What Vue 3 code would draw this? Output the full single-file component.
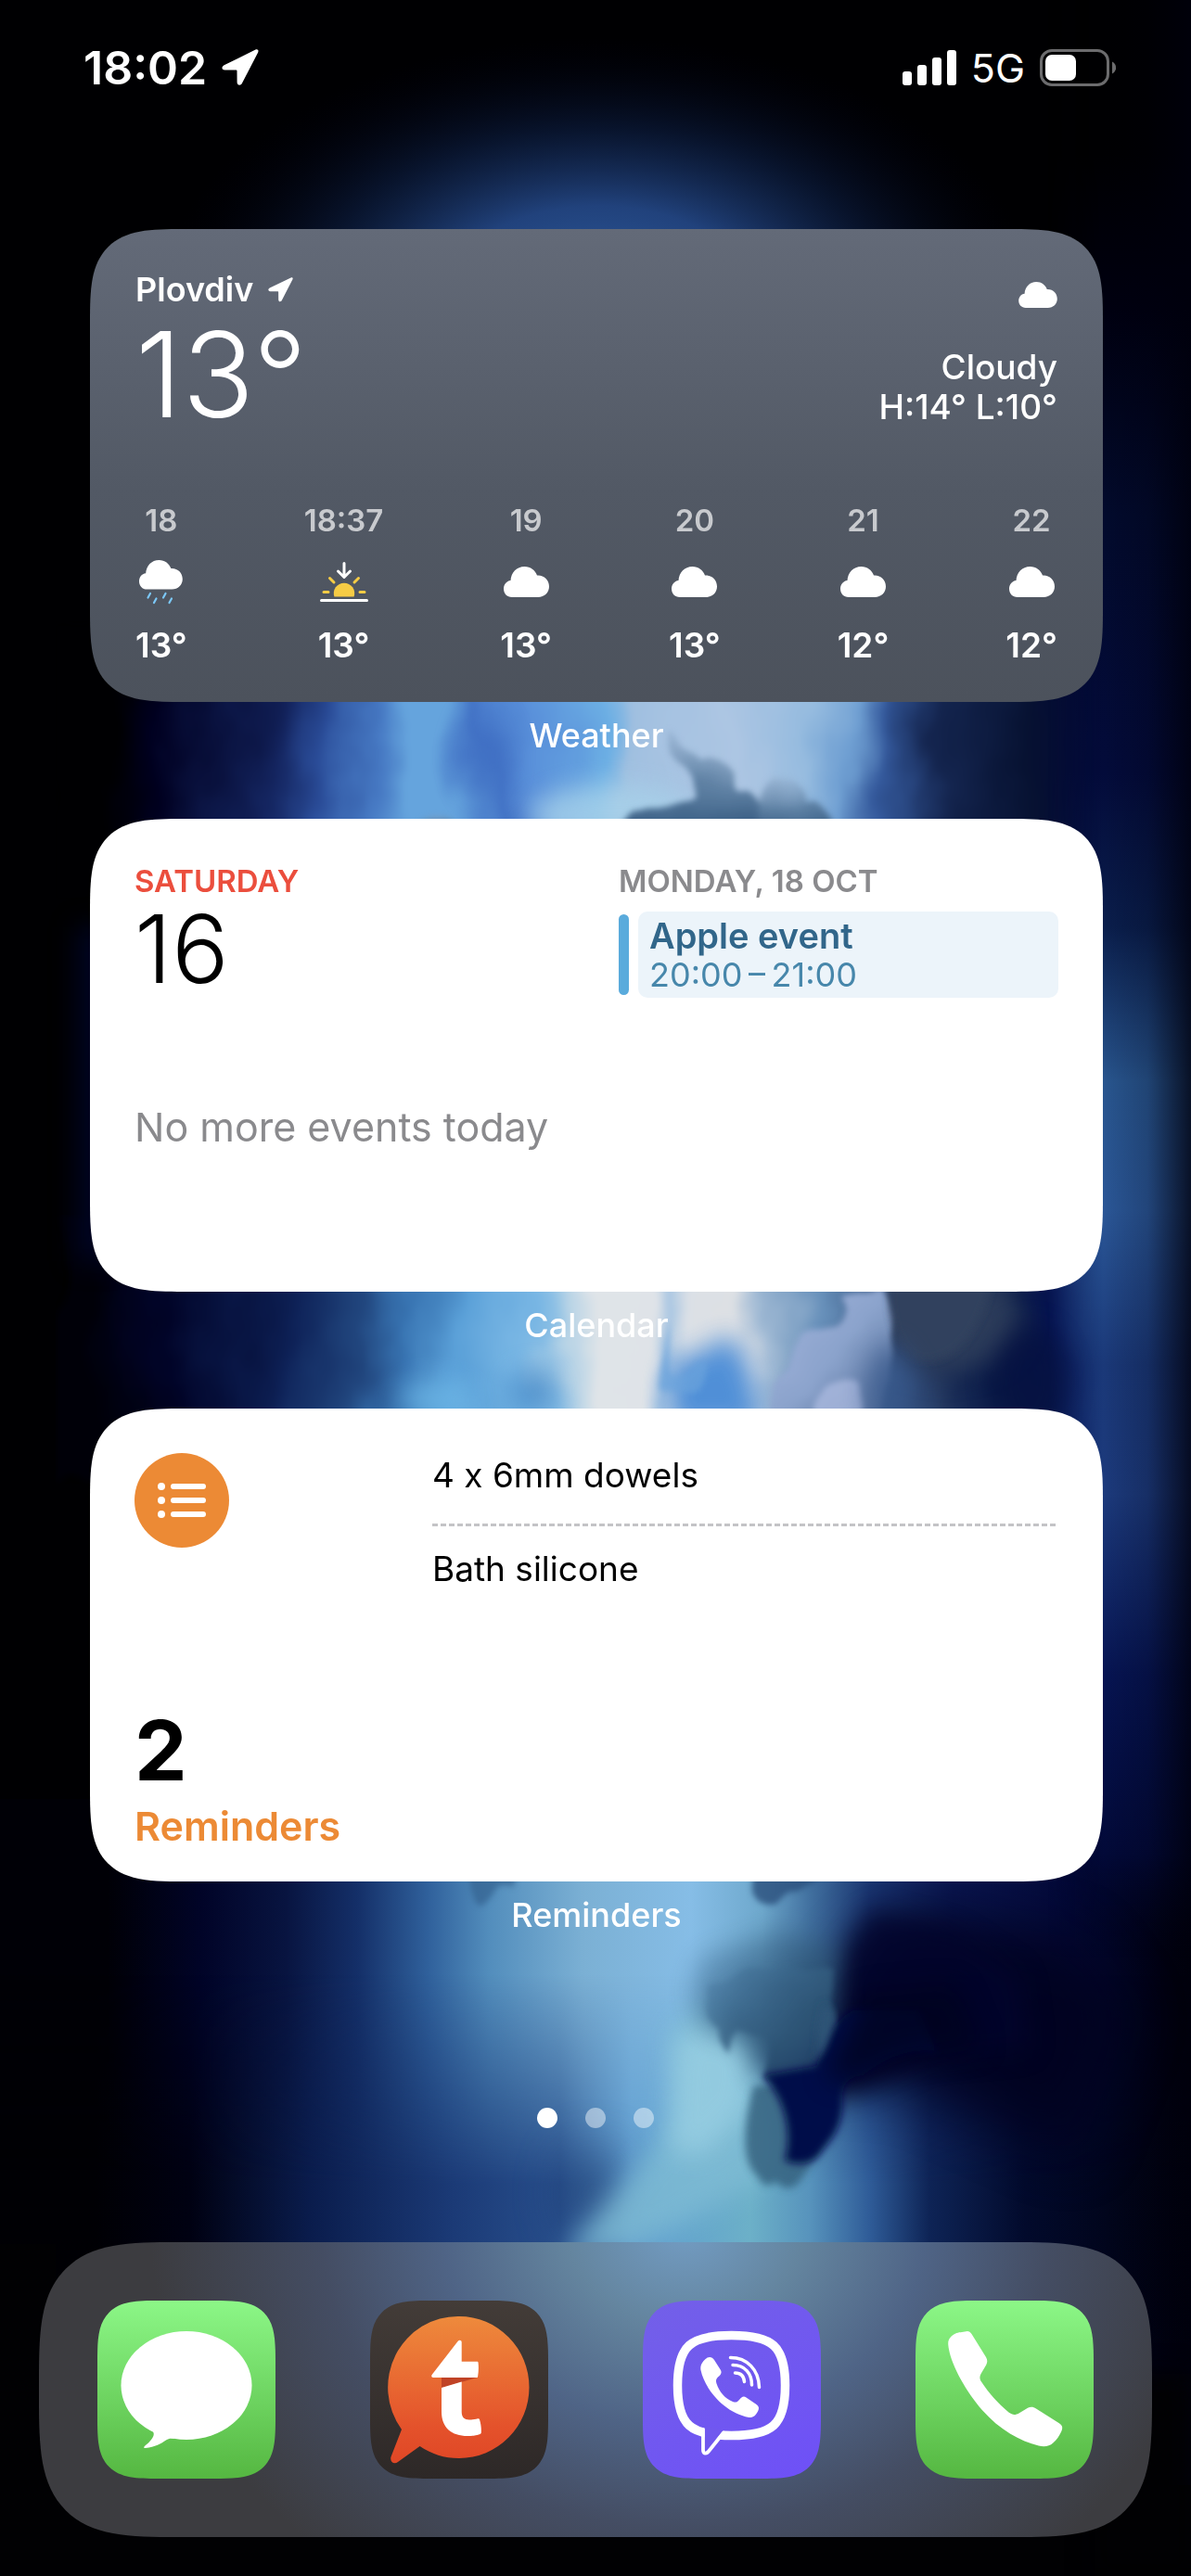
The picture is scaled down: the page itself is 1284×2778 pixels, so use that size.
<script setup>
const forecast = [
  { hour: '18', icon: 'rain', temp: '13°' },
  { hour: '18:37', icon: 'sunset', temp: '13°' },
  { hour: '19', icon: 'cloud', temp: '13°' },
  { hour: '20', icon: 'cloud', temp: '13°' },
  { hour: '21', icon: 'cloud', temp: '12°' },
  { hour: '22', icon: 'cloud', temp: '12°' },
]
const reminders = ['4 x 6mm dowels', 'Bath silicone']
const pages = [1, 2, 3]
const cloudPath =
  'M9 33C3.5 33 0 29 0 24c0-4.5 3-8.500 7.500-9C8 6.500 14 0 22.500 0 29 0 34 4 36 9.500 43.500 9 49 14.500 49 21.500 49 28 44 33 37 33Z'
</script>

<template>
  <div class="screen">
    <svg class="wallpaper" viewBox="0 0 1284 2778" preserveAspectRatio="none" aria-hidden="true">
      <defs>
        <radialGradient id="glow">
          <stop offset="0" stop-color="#2e5c9e" />
          <stop offset=".35" stop-color="#21427c" />
          <stop offset=".65" stop-color="#0b1a3a" stop-opacity=".75" />
          <stop offset="1" stop-color="#000010" stop-opacity="0" />
        </radialGradient>
        <linearGradient id="upper" gradientUnits="userSpaceOnUse" x1="0" y1="0" x2="1284" y2="0">
          <stop offset=".09" stop-color="#000002" />
          <stop offset=".14" stop-color="#000020" />
          <stop offset=".22" stop-color="#142560" />
          <stop offset=".27" stop-color="#2a4c98" />
          <stop offset=".31" stop-color="#477ac4" />
          <stop offset=".34" stop-color="#65a4dd" />
          <stop offset=".375" stop-color="#65a4dd" />
          <stop offset=".41" stop-color="#4373c6" />
          <stop offset=".45" stop-color="#5990da" />
          <stop offset=".505" stop-color="#6cafe4" />
          <stop offset=".53" stop-color="#9fbfe0" />
          <stop offset=".62" stop-color="#adc6e3" />
          <stop offset=".67" stop-color="#95bbdf" />
          <stop offset=".71" stop-color="#6f9fd2" />
          <stop offset=".74" stop-color="#34599c" />
          <stop offset=".79" stop-color="#14254f" />
          <stop offset=".86" stop-color="#071232" />
          <stop offset=".93" stop-color="#020734" />
        </linearGradient>
        <linearGradient id="middle" gradientUnits="userSpaceOnUse" x1="0" y1="0" x2="1284" y2="0">
          <stop offset=".08" stop-color="#000008" />
          <stop offset=".15" stop-color="#010428" />
          <stop offset=".23" stop-color="#0e2258" />
          <stop offset=".3" stop-color="#21467e" />
          <stop offset=".34" stop-color="#3874b2" />
          <stop offset=".39" stop-color="#5aa0d8" />
          <stop offset=".44" stop-color="#78b6e4" />
          <stop offset=".47" stop-color="#b4d2e6" />
          <stop offset=".5" stop-color="#dfe4e8" />
          <stop offset=".545" stop-color="#dfe3e8" />
          <stop offset=".565" stop-color="#a9c6e2" />
          <stop offset=".59" stop-color="#dbe0e6" />
          <stop offset=".615" stop-color="#dde0e4" />
          <stop offset=".64" stop-color="#a5bdd6" />
          <stop offset=".68" stop-color="#6790ba" />
          <stop offset=".74" stop-color="#35517e" />
          <stop offset=".8" stop-color="#22365e" />
          <stop offset=".85" stop-color="#0a1b48" />
          <stop offset=".9" stop-color="#061350" />
          <stop offset=".95" stop-color="#1b3874" />
        </linearGradient>
        <linearGradient id="lower" gradientUnits="userSpaceOnUse" x1="0" y1="0" x2="1284" y2="0">
          <stop offset=".09" stop-color="#000006" />
          <stop offset=".17" stop-color="#010428" />
          <stop offset=".24" stop-color="#081440" />
          <stop offset=".3" stop-color="#142f68" />
          <stop offset=".36" stop-color="#30619c" />
          <stop offset=".41" stop-color="#528dbc" />
          <stop offset=".49" stop-color="#7bb0d4" />
          <stop offset=".58" stop-color="#86bde6" />
          <stop offset=".64" stop-color="#6ea8cc" />
          <stop offset=".68" stop-color="#41709f" />
          <stop offset=".73" stop-color="#1a3672" />
          <stop offset=".8" stop-color="#0a1650" />
          <stop offset=".9" stop-color="#030836" />
          <stop offset="1" stop-color="#00000a" />
        </linearGradient>
        <linearGradient id="base" gradientUnits="userSpaceOnUse" x1="0" y1="0" x2="1284" y2="0">
          <stop offset=".08" stop-color="#000004" />
          <stop offset=".16" stop-color="#000112" />
          <stop offset=".26" stop-color="#0a1c4c" />
          <stop offset=".38" stop-color="#1b3a76" />
          <stop offset=".47" stop-color="#284f8c" />
          <stop offset=".53" stop-color="#5d9cd0" />
          <stop offset=".63" stop-color="#6cb0c8" />
          <stop offset=".68" stop-color="#5793bc" />
          <stop offset=".73" stop-color="#2f5c98" />
          <stop offset=".78" stop-color="#0e2456" />
          <stop offset=".86" stop-color="#020a2c" />
          <stop offset="1" stop-color="#00000c" />
        </linearGradient>
        <linearGradient id="edge" x1="0" y1="0" x2="0" y2="1">
          <stop offset=".06" stop-color="#000002" />
          <stop offset=".12" stop-color="#000010" />
          <stop offset=".2" stop-color="#020a2c" />
          <stop offset=".3" stop-color="#030b3a" />
          <stop offset=".36" stop-color="#0a1e4c" />
          <stop offset=".42" stop-color="#28558e" />
          <stop offset=".47" stop-color="#2a5696" />
          <stop offset=".53" stop-color="#1a3878" />
          <stop offset=".58" stop-color="#1c3a7c" />
          <stop offset=".65" stop-color="#061452" />
          <stop offset=".72" stop-color="#020938" />
          <stop offset=".76" stop-color="#01041e" stop-opacity="0" />
        </linearGradient>
        <linearGradient id="edgeFade" gradientUnits="userSpaceOnUse" x1="1130" y1="0" x2="1284" y2="0">
          <stop offset="0" stop-color="#000" />
          <stop offset=".38" stop-color="#fff" />
          <stop offset="1" stop-color="#fff" />
        </linearGradient>
        <linearGradient id="vignette" gradientUnits="userSpaceOnUse" x1="1190" y1="0" x2="1284" y2="0">
          <stop offset="0" stop-color="#00000c" stop-opacity="0" />
          <stop offset=".5" stop-color="#00000c" stop-opacity=".2" />
          <stop offset="1" stop-color="#00000c" stop-opacity=".8" />
        </linearGradient>
        <linearGradient id="fade" x1="0" y1="0" x2="0" y2="1">
          <stop offset="0" stop-color="#000" />
          <stop offset=".75" stop-color="#fff" />
        </linearGradient>
        <linearGradient id="smoke" x1="0" y1="0" x2="0" y2="1">
          <stop offset="0" stop-color="#8aa5c4" stop-opacity=".35" />
          <stop offset=".5" stop-color="#587b9e" stop-opacity=".9" />
          <stop offset="1" stop-color="#365a80" />
        </linearGradient>
        <linearGradient id="plume" x1="0" y1="0" x2="1" y2="1">
          <stop offset="0" stop-color="#a3b4dc" />
          <stop offset=".5" stop-color="#8ba3cc" />
          <stop offset="1" stop-color="#4a658f" />
        </linearGradient>
        <linearGradient id="teal" x1="0" y1="0" x2="1" y2="1">
          <stop offset="0" stop-color="#4c7ea6" stop-opacity=".35" />
          <stop offset=".6" stop-color="#2d5475" />
          <stop offset="1" stop-color="#1a3660" />
        </linearGradient>
        <mask id="fadeMask">
          <rect y="2130" width="1284" height="648" fill="#fff" />
          <rect y="2130" width="1284" height="300" fill="url(#fade)" />
        </mask>
        <mask id="edgeMask">
          <rect x="1130" width="154" height="2778" fill="url(#edgeFade)" />
        </mask>
        <filter id="b4" x="-30%" y="-30%" width="160%" height="160%"><feGaussianBlur stdDeviation="4" /></filter>
        <filter id="b14" x="-100%" y="-100%" width="300%" height="300%" color-interpolation-filters="sRGB"><feGaussianBlur stdDeviation="14" /></filter>
        <filter id="b30" x="-200%" y="-100%" width="500%" height="300%" color-interpolation-filters="sRGB"><feGaussianBlur stdDeviation="30" /></filter>
        <filter id="flow" x="0" y="0" width="100%" height="100%" color-interpolation-filters="sRGB">
          <feTurbulence type="fractalNoise" baseFrequency=".009 .006" numOctaves="4" seed="11" result="n" />
          <feDisplacementMap in="SourceGraphic" in2="n" scale="90" xChannelSelector="R" yChannelSelector="G" />
          <feGaussianBlur stdDeviation="3" />
        </filter>
        <filter id="wisp" x="-20%" y="-20%" width="140%" height="140%" color-interpolation-filters="sRGB">
          <feTurbulence type="fractalNoise" baseFrequency=".018" numOctaves="2" seed="7" result="n" />
          <feDisplacementMap in="SourceGraphic" in2="n" scale="26" xChannelSelector="R" yChannelSelector="G" />
          <feGaussianBlur stdDeviation="3" />
        </filter>
      </defs>
      <rect width="1284" height="2778" fill="#000002" />
      <ellipse cx="645" cy="320" rx="470" ry="280" fill="url(#glow)" />
      <rect x="60" y="670" width="1180" height="300" fill="url(#upper)" filter="url(#flow)" />
      <rect x="60" y="1310" width="1180" height="290" fill="url(#middle)" filter="url(#flow)" />
      <rect y="1940" width="1284" height="838" fill="url(#lower)" />
      <rect y="2130" width="1284" height="648" fill="url(#base)" mask="url(#fadeMask)" />
      <rect x="1130" width="154" height="2778" fill="url(#edge)" mask="url(#edgeMask)" />
      <rect x="1190" width="94" height="2778" fill="url(#vignette)" />
      <rect x="84" y="1000" width="40" height="360" fill="#000424" filter="url(#b14)" />

      <g>
        <ellipse cx="660" cy="880" rx="90" ry="34" fill="#a8d2ea" opacity=".8" filter="url(#b14)" />
        <ellipse cx="522" cy="815" rx="26" ry="50" fill="#3e6dc2" opacity=".5" filter="url(#b14)" />
        <g filter="url(#wisp)" fill="url(#smoke)">
          <path d="M717 792c16 6 26 30 36 32 6-8 36-6 38 8 2 12 6 20 16 16 10 4 14 24 8 50H668c2-16 8-26 20-24 18-10 44 0 62-14-8-26-30-42-33-68Z" />
          <path d="M818 900c-6-28 0-48 12-58 14-10 34 4 36 24 14-6 22 10 34 34Z" />
          <path d="M450 900c6-20 30-26 44 0Z" />
        </g>
      </g>

      <g>
        <ellipse cx="575" cy="1500" rx="24" ry="24" fill="#3f83c4" opacity=".7" filter="url(#b14)" />
        <ellipse cx="470" cy="1510" rx="40" ry="22" fill="#6cb6e6" opacity=".8" filter="url(#b14)" />
        <path d="M724 1540c-6-50-4-80 16-76 20-6 30-16 46-24 20 20 34 60 32 100Z" fill="#4187d6" opacity=".9" filter="url(#b14)" />
        <path d="M718 1430c8 20 4 40 14 50 14-8 22-20 30-14l-8 34-40 0Z" fill="#6aa3dc" opacity=".7" filter="url(#wisp)" />
        <ellipse cx="1020" cy="1424" rx="80" ry="56" fill="#2c3c5a" filter="url(#b14)" />
        <g filter="url(#wisp)">
          <path d="M832 1540c-4-60 12-108 70-112 18-6 6-18 6-32l44-6c14 40 10 100-12 150Z" fill="url(#plume)" />
          <path d="M878 1535c-6-28 16-52 46-48 10 12 4 30 0 48Z" fill="#aab9de" opacity=".8" />
        </g>
        <path d="M964 1370c-12 34-2 80 24 96 34 8 70-20 84-96Z" fill="#33435f" opacity=".9" filter="url(#b4)" />
        <ellipse cx="960" cy="1500" rx="26" ry="50" fill="#35568a" opacity=".7" filter="url(#b14)" />
        <ellipse cx="1110" cy="1490" rx="40" ry="60" fill="#05103f" opacity=".7" filter="url(#b14)" />
      </g>

      <g>
        <path d="M980 2060c-60 30-94 90-98 130l20 60 60-10 200 90 60-160-60-80Z" fill="#01021f" opacity=".9" filter="url(#b30)" />
        <path d="M940 2060c-24 40-44 60-48 94-2 30 0 50-10 80l20 30 38-14 60-30 110-10-10-80-70-46Z" fill="#02042c" opacity=".85" filter="url(#b14)" />
        <ellipse cx="640" cy="2365" rx="26" ry="44" fill="#1a3566" opacity=".8" filter="url(#b30)" />
        <path d="M722 2190l36-32 60 36 20 130-20 30-130 70-80 10 90-110 40-40Z" fill="#7fbcd4" opacity=".8" filter="url(#b14)" />
        <path d="M728 2202l30-20 54 24-6 70-50 50-36-10Z" fill="#97cee2" opacity=".85" filter="url(#b14)" />
        <path d="M756 2110c-18 36-6 70 10 80l40 14 10 36 50 0 36-50 0-90-60-20Z" fill="url(#teal)" opacity=".9" filter="url(#b14)" />
        <g filter="url(#wisp)">
          <path d="M762 2140c-8 26-2 50 12 54l12 24 10-22 26 4 8 40 44 4 26-60-6-60-60 0Z" fill="url(#teal)" />
          <path d="M820 2010c-10 20-2 44 14 44 10-4 12-18 26-14 12-4 24-6 36-30Z" fill="#2a4f7c" opacity=".8" />
          <path d="M500 2010c6 18 14 40 26 38 8-6 10-14 30-12l14-26Z" fill="#33618e" opacity=".7" />
        </g>
        <path d="M812 2250c-10 40-14 80 4 96 6 12 14 14 20 6 6 8 18 12 26 0 10-12 16-26 24-40l-20-70Z" fill="#35627f" opacity=".85" filter="url(#b4)" />
        <path d="M822 2238c22 22 34 60 24 92 14 6 32 4 40-10 14-16 24-30 22-60 2-14 6-20 22-22 26-20 50-30 80-26l-20-44-70 0c-20 10-30 30-40 60Z" fill="#030d48" filter="url(#b4)" />
        <path d="M930 2150l100-10 30 70-80 10-60 24-30 0Z" fill="#01031f" opacity=".8" filter="url(#b14)" />
        <path d="M888 2160c-8 30-6 50-10 60 10 0 20-30 20-52Z" fill="#2f5577" filter="url(#b4)" />
      </g>
      <rect y="2680" width="1284" height="98" fill="#010103" />
      <rect y="2420" x="0" width="60" height="358" fill="#010103" />
      <rect y="2560" x="1180" width="104" height="218" fill="#010103" filter="url(#b14)" />
    </svg>

    <header class="status">
      <div class="status-left">
        <time>18:02</time>
        <svg width="40" height="40" viewBox="0 0 40 40" aria-label="Location in use">
          <path d="M36.500.6 2.600 17.200C-.6 19-.1 22.400 3.400 22.500l12.200.1c.6 0 .9.300.9.900l.1 12.300c.1 3.600 4 4 5.500.8L39.200 3.400C40.200 1.200 38.600-.4 36.500.6Z" fill="#fff" />
        </svg>
      </div>
      <div class="status-right">
        <svg width="58" height="38" viewBox="0 0 58 38" fill="#fff" aria-label="Signal strength">
          <rect y="23" width="10" height="15" rx="3" />
          <rect x="16" y="16" width="10" height="22" rx="3" />
          <rect x="32" y="8" width="10" height="30" rx="3" />
          <rect x="48" width="10" height="38" rx="3" />
        </svg>
        <span class="network">5G</span>
        <svg width="82" height="40" viewBox="0 0 82 40" aria-label="Battery">
          <rect x="1.500" y="1.500" width="72" height="37" rx="11.500" fill="none" stroke="#6c6c6e" stroke-width="3" />
          <rect x="6" y="6" width="33" height="28" rx="7" fill="#fff" />
          <path d="M78 13.500c5.500 2.500 5.500 10.500 0 13Z" fill="#6c6c6e" />
        </svg>
      </div>
    </header>

    <main class="widgets">
      <section class="widget">
        <div class="card weather">
          <div class="weather-now">
            <div>
              <h2 class="place">
                Plovdiv
                <svg width="27" height="27" viewBox="0 0 40 40" aria-hidden="true">
                  <path d="M36.500.6 2.600 17.200C-.6 19-.1 22.400 3.400 22.500l12.200.1c.6 0 .9.300.9.900l.1 12.300c.1 3.600 4 4 5.500.8L39.200 3.400C40.200 1.200 38.600-.4 36.500.6Z" fill="#fff" />
                </svg>
              </h2>
              <p class="temperature">13°</p>
            </div>
            <div class="conditions">
              <svg width="42" height="28" viewBox="0 0 49 33" aria-hidden="true"><path :d="cloudPath" fill="#fff" /></svg>
              <p>Cloudy<br />H:14° L:10°</p>
            </div>
          </div>
          <ul class="forecast">
            <li v-for="item in forecast" :key="item.hour">
              <span class="hour">{{ item.hour }}</span>
              <span class="sky">
                <svg v-if="item.icon === 'cloud'" width="49" height="33" viewBox="0 0 49 33" aria-label="Cloudy">
                  <path :d="cloudPath" fill="#fff" />
                </svg>
                <svg v-else-if="item.icon === 'rain'" width="47" height="48" viewBox="0 0 47 48" aria-label="Rain">
                  <path :d="cloudPath" fill="#fff" transform="scale(.955)" />
                  <path d="M12 36l-2.500 4.500M18.500 41.500 16 46M28.500 36 26 40.500M35 41.500 32.500 46" stroke="#7cc8f8" stroke-width="2.200" stroke-linecap="round" />
                </svg>
                <svg v-else width="52" height="44" viewBox="0 0 52 44" fill="none" stroke-width="3" stroke-linecap="round" stroke-linejoin="round" aria-label="Sunset">
                  <path d="M26 1.500V16M19.500 10l6.500 6.500 6.500-6.500M1.500 41.500h49" stroke="#fff" />
                  <path d="M4 32.500h5M43 32.500h5M10.500 17.500l4.500 4.500M41.500 17.500 37 22" stroke="#f6cc45" />
                  <path d="M15.400 37.500a11.200 11.200 0 1 1 21.200 0Z" fill="#f6cc45" />
                </svg>
              </span>
              <span class="degrees">{{ item.temp }}</span>
            </li>
          </ul>
        </div>
        <p class="caption">Weather</p>
      </section>

      <section class="widget">
        <div class="card calendar">
          <div>
            <h2 class="day today">SATURDAY</h2>
            <p class="date">16</p>
            <p class="empty">No more events today</p>
          </div>
          <div>
            <h2 class="day">MONDAY, 18 OCT</h2>
            <div class="event">
              <span class="event-bar"></span>
              <div class="event-body">
                <h3>Apple event</h3>
                <p>20:00&#8201;–&#8201;21:00</p>
              </div>
            </div>
          </div>
        </div>
        <p class="caption">Calendar</p>
      </section>

      <section class="widget">
        <div class="card reminders">
          <div class="summary">
            <svg width="102" height="102" viewBox="0 0 102 102" aria-hidden="true">
              <circle cx="51" cy="51" r="51" fill="#ec8a35" />
              <g fill="#fff">
                <circle cx="29" cy="36" r="4" /><circle cx="29" cy="51" r="4" /><circle cx="29" cy="66" r="4" />
                <rect x="39" y="33" width="38" height="6" rx="3" />
                <rect x="39" y="48" width="38" height="6" rx="3" />
                <rect x="39" y="63" width="38" height="6" rx="3" />
              </g>
            </svg>
            <div>
              <p class="count">2</p>
              <h2 class="list-name">Reminders</h2>
            </div>
          </div>
          <ul class="tasks">
            <li v-for="task in reminders" :key="task">{{ task }}</li>
          </ul>
        </div>
        <p class="caption">Reminders</p>
      </section>
    </main>

    <nav class="pager" aria-label="Pages">
      <button v-for="page in pages" :key="page" type="button" :class="{ current: page === 1 }" :aria-label="`Page ${page}`"></button>
    </nav>

    <nav class="dock" aria-label="Dock">
      <button type="button" class="app messages" aria-label="Messages">
        <svg viewBox="0 0 192 192" fill="#fff">
          <ellipse cx="96" cy="91.500" rx="70.500" ry="58.500" />
          <path d="M56 136c6 6 6 9 2 14-3 4-5 5-7.500 7.500-.8 1.200 0 1.600 1.500 1.500 10-1 17-5 22-8.500 3-2 5-2 9-1.500l-10-20Z" />
        </svg>
      </button>
      <button type="button" class="app tapatalk" aria-label="Tapatalk">
        <svg viewBox="0 0 192 192">
          <defs>
            <linearGradient id="flame" x1="0" y1="0" x2="0" y2="1">
              <stop offset="0" stop-color="#ee8a3c" />
              <stop offset=".75" stop-color="#e4522b" />
              <stop offset="1" stop-color="#e04726" />
            </linearGradient>
          </defs>
          <path d="M96 17a75.500 76.500 0 0 1 0 153c-16 0-30-4.500-42.400-13L30 174c-4 3-9 0-7.500-5.500L34 139A75.500 76.500 0 0 1 96 17Z" fill="url(#flame)" />
          <path d="M77 83h38.500L77 94Z" fill="#c04326" />
          <path d="M94.500 44c1.500-2 4.200-1.500 4.200 1v20.700h16.600c.8 0 1.200.5 1.300 1.300.5 5 .4 10-.5 15-.1.700-.6 1-1.200 1H68c-1.800 0-2.300-1.700-1.200-3.300ZM77 94l21.700-6.500V120c0 6 3 8.400 8 8.400 3.500 0 6-.3 9.500-1.200 1-.2 1.500.1 1.800 1 1.500 5 2 9 1.800 14-.1 1-.5 1.400-1.300 1.700-4 1.500-9 2.100-13.500 2.100-17 0-28-9-28-26Z" fill="#fff" />
        </svg>
      </button>
      <button type="button" class="app viber" aria-label="Viber">
        <svg viewBox="0 0 192 192" fill="none" stroke-linecap="round" stroke-linejoin="round">
          <path d="M95.500 37.500c44 0 58 11 58 54s-14 54-58 54-58-11-58-54 14-54 58-54Z" stroke="#fff" stroke-width="9.500" />
          <path d="M66.500 135v25c0 2.500 1.500 2.500 3.500.5L87 140Z" fill="#7058ee" />
          <path d="M65 139V161c0 4.500 3.500 4.500 6 1.500L87 142.500" stroke="#fff" stroke-width="3.800" />
          <path d="M69 62c3-2 6-1 8 2l7 11c1.500 3 0 5-3 7.500-2 2-2.500 4-1.500 7 3 9 9 16 17.500 19.500 3 1.200 5 .5 7-2 2.500-3 4.500-4.500 7.500-2.500l11 7.500c3 2 3 4.500 1.500 7.500-2 4-5 7-9.500 6.500C88 121 67 96 62.500 75c-1-5 2-10 6.500-13Z" fill="#fff" />
          <path d="M94.500 61.500c18 0 30.500 13 31 32M97 69.500c13 0 20.500 9 20.500 21.500M99.500 78c6.500 0 9.500 4 10 9.500" stroke="#fff" stroke-width="3.500" />
        </svg>
      </button>
      <button type="button" class="app phone" aria-label="Phone">
        <svg viewBox="0 0 192 192" fill="#fff">
          <path d="M53 33.500c3.500-1.200 5.500-.5 7.500 2.500l15.500 25c2 3.500 1.500 6.500-.5 9.500l-5 8.500c-1.600 3-1.500 5.500.5 8.500 8 12 18 23.500 29.500 33 4 3 7 3.200 11 1l9.500-5.700c3-1.700 6-1.500 9 .7l24.500 15.500c4 2.500 4.500 5 2.800 9-2 4.500-5 9-9 12.500-4 3.700-9.500 4.500-15.500 3-20-5-42-17-61-38.500-18-21-34.500-50-36.500-70-.5-5.500 1.500-8.500 6-11.500 4-2.700 7.500-2 11.700-3Z" />
        </svg>
      </button>
    </nav>
  </div>
</template>

<style>
body {
  background: #000;
}
</style>

<style scoped>
.screen {
  position: relative;
  isolation: isolate;
  display: flex;
  flex-direction: column;
  min-height: 100vh;
  box-sizing: border-box;
  padding-bottom: 42px;
  overflow: hidden;
  color: #fff;
  font-family: Inter, "Liberation Sans", sans-serif;
}
.wallpaper {
  position: absolute;
  inset: 0;
  z-index: -1;
  width: 100%;
  height: 100%;
}
h2, h3, p, ul {
  margin: 0;
  padding: 0;
  font-weight: 400;
  list-style: none;
}
svg {
  display: block;
  flex: none;
}
button {
  padding: 0;
  border: 0;
}

.status {
  display: flex;
  align-items: center;
  justify-content: space-between;
  padding: 43px 81px 144px 90px;
  line-height: 60px;
}
.status-left,
.status-right {
  display: flex;
  align-items: center;
}
.status-left {
  gap: 16px;
  font-size: 50px;
  font-weight: 600;
}
.status-right {
  gap: 16px;
}
.network {
  font-size: 43px;
}

.widgets {
  padding: 0 95px 0 97px;
}
.card {
  min-height: 510px;
  box-sizing: border-box;
  border-radius: 68px;
  background: #fff;
  color: #000;
}
.caption {
  padding: 14px 0 68px;
  font-size: 36px;
  font-weight: 500;
  line-height: 44px;
  text-align: center;
}

.weather {
  display: flex;
  flex-direction: column;
  justify-content: space-between;
  padding: 43px 49px 39px;
  background: linear-gradient(#636a78, #525965 55%, #4c525c);
  color: #fff;
}
.weather-now {
  display: flex;
  justify-content: space-between;
}
.place {
  display: flex;
  align-items: center;
  gap: 16px;
  font-size: 36px;
  font-weight: 600;
  line-height: 44px;
}
.temperature {
  font-size: 128px;
  font-weight: 300;
  line-height: 140px;
}
.conditions {
  display: flex;
  flex-direction: column;
  align-items: flex-end;
  gap: 42px;
  padding-top: 14px;
  font-size: 37px;
  line-height: 43px;
  text-align: right;
}
.conditions p {
  font-weight: 500;
}
.forecast {
  display: flex;
  justify-content: space-between;
  text-align: center;
}
.forecast li {
  display: flex;
  flex-direction: column;
  align-items: center;
}
.hour {
  color: #c8cace;
  font-size: 33px;
  font-weight: 600;
  line-height: 40px;
}
.sky {
  display: flex;
  align-items: center;
  height: 93px;
}
.degrees {
  font-size: 37px;
  font-weight: 600;
  line-height: 44px;
}

.calendar {
  display: grid;
  grid-template-columns: 522fr 474fr;
  padding: 47px 48px;
}
.day {
  color: #8a8a8d;
  font-size: 33px;
  font-weight: 600;
  line-height: 40px;
}
.today {
  color: #eb4e3d;
}
.date {
  font-size: 102px;
  font-weight: 300;
  line-height: 106px;
}
.empty {
  margin-top: 111px;
  color: #8a8a8d;
  font-size: 43px;
  line-height: 56px;
}
.event {
  display: flex;
  align-items: center;
  gap: 10px;
  margin-top: 13px;
}
.event-bar {
  align-self: stretch;
  width: 11px;
  margin: 3px 0;
  border-radius: 6px;
  background: #5aabdc;
}
.event-body {
  flex: 1;
  padding: 5px 12px 4px;
  border-radius: 10px;
  background: #ecf4fa;
  color: #4787ab;
  font-size: 36px;
  line-height: 42px;
}
.event-body h3 {
  color: #31668a;
  font-size: 38px;
  font-weight: 600;
}

.reminders {
  display: grid;
  grid-template-columns: 321fr 675fr;
  padding: 48px 48px 32px;
}
.summary {
  display: flex;
  flex-direction: column;
  justify-content: space-between;
}
.count {
  font-size: 90px;
  font-weight: 700;
  line-height: 106px;
}
.list-name {
  color: #ec8a35;
  font-size: 43px;
  font-weight: 600;
  line-height: 56px;
}
/* keeps "4 x 6" as a plain letter x */
.tasks {
  font-variant-ligatures: no-contextual;
}
.tasks li {
  padding: 22px 0 28px;
  background: repeating-linear-gradient(90deg, #c4c4c6 0 6px, transparent 6px 9px) bottom / 100% 3px no-repeat;
  font-size: 37px;
  line-height: 48px;
}
.tasks li:first-child {
  padding: 0 0 31px;
}
.tasks li:last-child {
  background: none;
}

.pager {
  display: flex;
  justify-content: center;
  gap: 30px;
  margin: 118px 0 123px;
}
.pager button {
  width: 22px;
  height: 22px;
  border-radius: 50%;
  background: rgba(255, 255, 255, 0.45);
}
.pager .current {
  background: #fff;
}

.dock {
  display: flex;
  justify-content: space-between;
  margin: auto 42px 0;
  padding: 63px;
  border-radius: 104px;
  background:
    radial-gradient(ellipse 48% 150% at 58% -5%, #739dc4 0, #64859f 22%, #4f6486 45%, #444d63 68%, rgba(60, 60, 70, 0) 100%),
    #3c3c40;
}
.app {
  width: 192px;
  height: 192px;
  border-radius: 44px;
}
.app svg {
  width: 100%;
  height: 100%;
}
.messages,
.phone {
  background: linear-gradient(#8cf787, #55b741);
}
.tapatalk {
  background: linear-gradient(#433c38, #2d2827);
}
.viber {
  background: linear-gradient(150deg, #7360e8, #6e50f7);
}

@supports (corner-shape: superellipse(1.7)) {
  .card {
    border-radius: 101px;
    corner-shape: superellipse(1.7);
  }
  .dock {
    border-radius: 150px;
    corner-shape: superellipse(1.7);
  }
  .app {
    border-radius: 66px;
    corner-shape: superellipse(1.7);
  }
}
</style>
